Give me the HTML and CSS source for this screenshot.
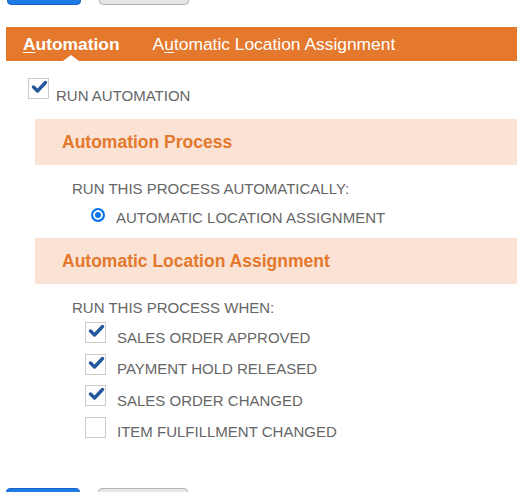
FILE: index.html
```html
<!DOCTYPE html>
<html lang="en">
<head>
    <meta charset="UTF-8">
    <title>Automation</title>
    <link rel="stylesheet" href="styles.css">
</head>
<body>
    <div class="actions actions-top">
        <button class="btn btn-primary" type="button"></button>
        <button class="btn btn-secondary" type="button"></button>
    </div>

    <nav class="tabs">
        <span class="tab tab-active"><u>A</u>utomation</span>
        <span class="tab">A<u>u</u>tomatic Location Assignment</span>
    </nav>

    <div class="check-row main-check">
        <span class="checkbox checked">
            <svg viewBox="0 0 21 21" width="21" height="21"><polyline points="5.5,9 9.5,13 17.5,4.5"/></svg>
        </span>
        <span class="check-label">RUN AUTOMATION</span>
    </div>

    <section class="panel">
        <h2 class="panel-title">Automation Process</h2>
        <div class="panel-body">
            <div class="field-label">RUN THIS PROCESS AUTOMATICALLY:</div>
            <div class="radio-row">
                <span class="radio"></span>
                <span class="check-label">AUTOMATIC LOCATION ASSIGNMENT</span>
            </div>
        </div>
    </section>

    <section class="panel">
        <h2 class="panel-title">Automatic Location Assignment</h2>
        <div class="panel-body">
            <div class="field-label">RUN THIS PROCESS WHEN:</div>
            <div class="check-list">
                <div class="check-row">
                    <span class="checkbox checked">
                        <svg viewBox="0 0 21 21" width="21" height="21"><polyline points="5.5,9 9.5,13 17.5,4.5"/></svg>
                    </span>
                    <span class="check-label">SALES ORDER APPROVED</span>
                </div>
                <div class="check-row">
                    <span class="checkbox checked">
                        <svg viewBox="0 0 21 21" width="21" height="21"><polyline points="5.5,9 9.5,13 17.5,4.5"/></svg>
                    </span>
                    <span class="check-label">PAYMENT HOLD RELEASED</span>
                </div>
                <div class="check-row">
                    <span class="checkbox checked">
                        <svg viewBox="0 0 21 21" width="21" height="21"><polyline points="5.5,9 9.5,13 17.5,4.5"/></svg>
                    </span>
                    <span class="check-label">SALES ORDER CHANGED</span>
                </div>
                <div class="check-row">
                    <span class="checkbox"></span>
                    <span class="check-label">ITEM FULFILLMENT CHANGED</span>
                </div>
            </div>
        </div>
    </section>

    <div class="actions actions-bottom">
        <button class="btn btn-primary" type="button"></button>
        <button class="btn btn-secondary" type="button"></button>
    </div>
</body>
</html>
```

FILE: styles.css
```css
/* Automation settings page */
html, body {
    overflow: hidden;
}

body {
    margin: 0;
    font-family: 'Liberation Sans', Arial, sans-serif;
    color: #666;
    background: #fff;
}

/* Button rows (cut off at the top and bottom) */
.actions {
    display: flex;
    gap: 18px;
    padding-left: 6px;
    overflow: hidden;
}

.actions-top {
    height: 5px;
    align-items: flex-end;
    padding-left: 7px;
}

.actions-bottom {
    height: 4px;
    align-items: flex-start;
    margin-top: 48px;
}

.btn {
    flex: none;
    height: 28px;
    border-radius: 4px;
    padding: 0;
}

.btn-primary {
    width: 74px;
    background: #1f7ae5;
    border: 1px solid #1664c8;
}

.btn-secondary {
    width: 90px;
    background: #e6e6e6;
    border: 1px solid #b3b3b3;
}

/* Tabs */
.tabs {
    display: flex;
    align-items: stretch;
    gap: 33px;
    height: 34px;
    margin: 22px 0 0 6px;
    padding-left: 17px;
    background: #e4782d;
}

.tab {
    position: relative;
    display: flex;
    align-items: center;
    color: #fff;
    font-size: 17.4px;
}

.tab u {
    text-decoration-thickness: 1px;
    text-underline-offset: 2px;
}

.tab-active {
    font-weight: bold;
}

.tab-active::after {
    content: "";
    position: absolute;
    left: 50%;
    bottom: 0;
    margin-left: -8px;
    border-left: 8px solid transparent;
    border-right: 8px solid transparent;
    border-bottom: 6px solid #fff;
}

/* Checkboxes and radios */
.check-row {
    display: flex;
    align-items: flex-start;
    gap: 11px;
}

.main-check {
    margin-top: 17px;
    padding-left: 28px;
    gap: 7px;
}

.checkbox {
    flex: none;
    position: relative;
    width: 21px;
    height: 21px;
    box-sizing: border-box;
    border: 1px solid #cbcbcb;
    background: #fff;
}

.checkbox svg {
    position: absolute;
    left: -1px;
    top: -1px;
}

.checkbox polyline {
    fill: none;
    stroke: #25579c;
    stroke-width: 3.4;
    stroke-linecap: round;
    stroke-linejoin: round;
}

.check-label {
    font-size: 15px;
    line-height: 17px;
    margin-top: 6.5px;
    white-space: nowrap;
}

.main-check .check-label {
    margin-top: 8.5px;
}

.radio-row {
    display: flex;
    align-items: flex-start;
    gap: 11px;
    margin-top: 11px;
    padding-left: 19px;
}

.radio {
    flex: none;
    width: 14px;
    height: 14px;
    box-sizing: border-box;
    border-radius: 50%;
    border: 2px solid #0b74f0;
    background: #0b74f0;
    box-shadow: inset 0 0 0 2px #fff;
}

.radio-row .check-label {
    margin-top: 1.5px;
}

/* Panels */
.panel {
    margin-top: 15.5px;
}

.panel + .panel {
    margin-top: 12px;
}

.panel-title {
    margin: 0 0 0 35px;
    height: 46px;
    display: flex;
    align-items: center;
    padding-left: 27px;
    background: #fae3d5;
    color: #e4782d;
    font-size: 17.5px;
    font-weight: bold;
}

.panel-body {
    padding-left: 72px;
}

.field-label {
    margin-top: 14.5px;
    font-size: 15px;
    line-height: 17px;
}

.check-list {
    display: flex;
    flex-direction: column;
    gap: 8px;
    margin-top: 6.5px;
    padding-left: 13px;
}
```
